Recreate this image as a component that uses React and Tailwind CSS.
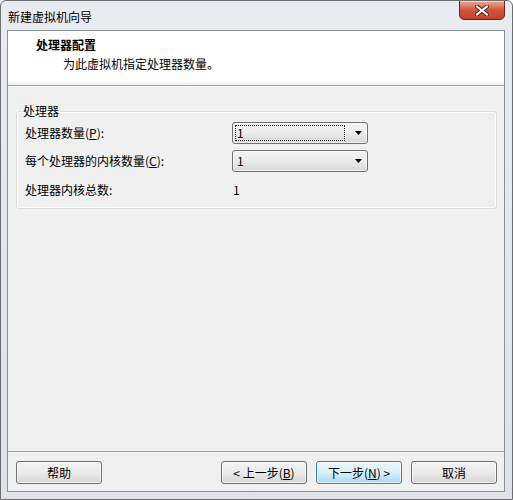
const font = { fontFamily: '"Noto Sans CJK SC", "Liberation Sans", sans-serif' };

const CloseButton = () => (
  <div className="self-start mt-[-1px] w-[46px] h-[20px] rounded-b-[5px] border border-[#5a2a22] bg-gradient-to-b from-[#e9a99a] via-[#d2553d] to-[#c7432b] flex items-center justify-center shadow-[inset_0_1px_0_rgba(255,255,255,0.5)]">
    <svg width="14" height="11" viewBox="0 0 14 11">
      <path d="M2 1.5 L12 9.5 M12 1.5 L2 9.5" stroke="#4a2420" strokeWidth="4" strokeLinecap="square" />
      <path d="M2 1.5 L12 9.5 M12 1.5 L2 9.5" stroke="#ffffff" strokeWidth="2" strokeLinecap="square" />
    </svg>
  </div>
);

const Arrow = () => (
  <svg width="7" height="4" viewBox="0 0 7 4" className="shrink-0">
    <path d="M0 0 L7 0 L3.5 4 Z" fill="#000" />
  </svg>
);

const Combo = ({ value, focused }) => (
  <div className="w-[136px] h-[22px] rounded-[3px] border border-[#707070] bg-gradient-to-b from-[#f2f2f2] via-[#ebebeb] to-[#d8d8d8] flex items-center pl-[2px] pr-[5px] gap-[10px] shadow-[inset_0_0_0_1px_rgba(255,255,255,0.6)]">
    <div className={`flex-1 h-[16px] flex items-center pl-[1px] ${focused ? "border border-dotted border-[#222]" : "border border-transparent"}`}>
      <span className="text-[12px] leading-none text-black">{value}</span>
    </div>
    <Arrow />
  </div>
);

const WizButton = ({ children, primary }) => (
  <button
    type="button"
    className={`w-[86px] h-[23px] rounded-[3px] border text-[12px] text-black flex items-center justify-center shadow-[inset_0_0_0_1px_rgba(255,255,255,0.7)] ${
      primary
        ? "border-[#3c7fb1] bg-gradient-to-b from-[#eaf6fd] via-[#d9f0fc] to-[#a7d9f5]"
        : "border-[#707070] bg-gradient-to-b from-[#f2f2f2] via-[#ebebeb] to-[#d6d6d6]"
    }`}
  >
    {children}
  </button>
);

export default function App() {
  return (
    <div style={font} className="w-[513px] h-[500px] bg-gradient-to-b from-[#e8ebef] to-[#dfe3e8] border border-[#6d6d6d] rounded-t-[6px] flex flex-col pl-[6px] pr-[7px] pb-[7px] overflow-hidden">
      <div className="h-[29px] flex justify-between">
        <span className="text-[12px] text-black pl-[1px] pt-[8px] leading-[16px]">新建虚拟机向导</span>
        <CloseButton />
      </div>

      <div className="flex-1 border border-[#8b9097] bg-[#f0f0f0] flex flex-col">
        <div className="h-[51px] bg-white flex flex-col pt-[6px] pl-[28px]">
          <span className="text-[12px] leading-[16px] font-bold text-black">处理器配置</span>
          <span className="text-[12px] leading-[16px] text-black pl-[27px] pt-[3px]">为此虚拟机指定处理器数量。</span>
        </div>
        <div className="h-[3px] bg-[#f4f4f4]" />
        <div className="h-px bg-[#a0a0a0]" />
        <div className="h-px bg-white" />

        <div className="flex-1 flex flex-col">
          <fieldset className="ml-[8px] mr-[7px] mt-[16px] border border-[#dcdcdc] rounded-[3px] px-[8px] pt-[3px] pb-[7px] flex flex-col gap-[6px] shadow-[inset_0_0_0_1px_#ffffff]">
            <legend className="ml-[-3px] px-[1px] text-[12px] leading-[16px] text-black">处理器</legend>
            <div className="h-[22px] flex items-center">
              <span className="w-[207px] text-[12px] text-black">处理器数量(<span className="underline">P</span>):</span>
              <Combo value="1" focused />
            </div>
            <div className="h-[22px] flex items-center">
              <span className="w-[207px] text-[12px] text-black">每个处理器的内核数量(<span className="underline">C</span>):</span>
              <Combo value="1" />
            </div>
            <div className="h-[22px] flex items-center mt-[1px]">
              <span className="w-[208px] text-[12px] text-black">处理器内核总数:</span>
              <span className="text-[12px] text-black">1</span>
            </div>
          </fieldset>
        </div>

        <div className="h-px bg-[#a0a0a0]" />
        <div className="flex items-center pl-[8px] pr-[7px] pt-[9px] pb-[7px]">
          <WizButton>帮助</WizButton>
          <div className="ml-auto flex gap-[9px]">
            <WizButton>
              &lt; 上一步(<span className="underline">B</span>)
            </WizButton>
            <WizButton primary>
              下一步(<span className="underline">N</span>) &gt;
            </WizButton>
            <WizButton>取消</WizButton>
          </div>
        </div>
      </div>
    </div>
  );
}
